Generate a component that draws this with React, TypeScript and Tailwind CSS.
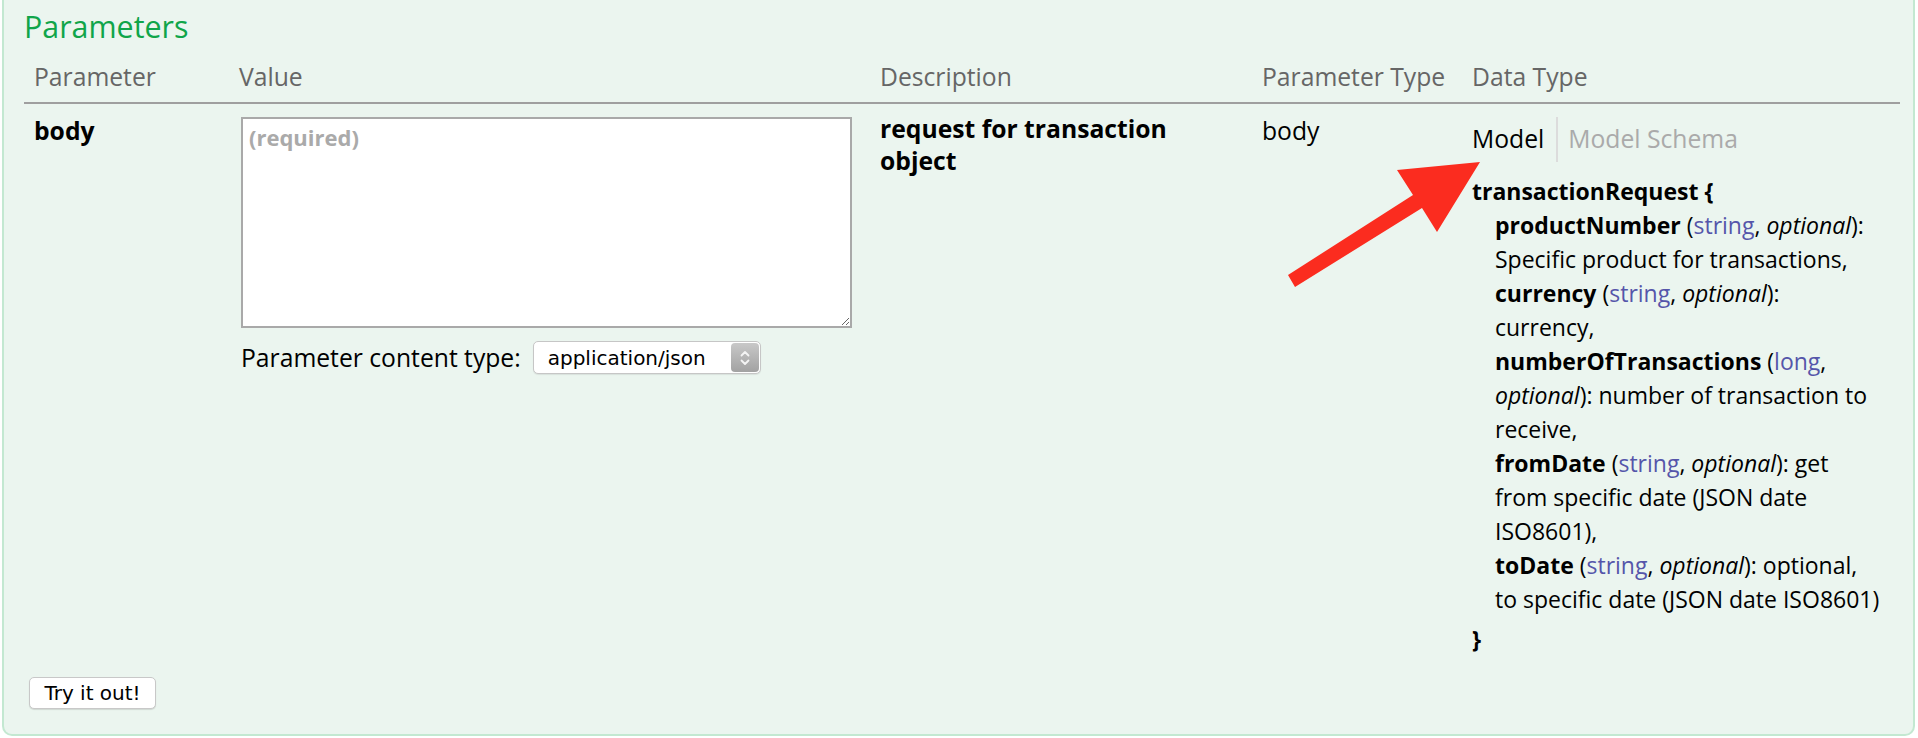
import React from 'react';

const cols = 'grid grid-cols-[205px_641px_382px_210px_438px]';

const T: React.FC<{ children: React.ReactNode }> = ({ children }) => (
  <span className="text-[#5555aa]">{children}</span>
);

const Opt = () => <span className="italic">optional</span>;

const App: React.FC = () => {
  return (
    <div className="relative w-[1918px] h-[738px] bg-white font-['Open_Sans',sans-serif] text-black overflow-hidden">
      <div className="ml-[2px] mr-[3px] bg-[#ebf5ef] border-2 border-t-0 border-[#c3e8d1] rounded-b-[10px] pt-[9px] pl-[20px] pr-[13px] pb-[25px]">
        <h4 className="text-[30.4px] leading-[36px] text-[#10a54a]">Parameters</h4>

        {/* header */}
        <div className={`${cols} mt-[16px] border-b-2 border-[#9f9f9f] text-[24.7px] leading-[32px] text-[#666]`}>
          <div className="px-[10px] pb-[9px]">Parameter</div>
          <div className="px-[10px] pb-[9px]">Value</div>
          <div className="px-[10px] pb-[9px]">Description</div>
          <div className="px-[10px] pb-[9px]">Parameter Type</div>
          <div className="px-[10px] pb-[9px]">Data Type</div>
        </div>

        {/* body row */}
        <div className={`${cols} text-[24.7px] leading-[32px]`}>
          <div className="px-[10px] pt-[11px] font-bold">body</div>
          <div className="px-[10px] pt-[11px]">
            <textarea
              placeholder="(required)"
              className="block ml-[2px] mt-[2px] w-[611px] h-[211px] bg-white border-2 border-[#a9a9a9] px-[6px] py-[3px] text-[22px] leading-[30px] font-bold outline-none placeholder:text-[#aaa] placeholder:font-bold"
            />
            <div className="flex items-center mt-[13px] ml-[2px]">
              <span className="text-[24.7px] leading-[32px]">Parameter content type:</span>
              <div className="ml-[12px] w-[228px] h-[33px] bg-white border border-[#c6c6c6] rounded-[5px] flex items-center justify-between shadow-[0_1px_1px_rgba(0,0,0,0.08)]">
                <span className="pl-[14px] font-['DejaVu_Sans',sans-serif] text-[20px] leading-[24px]">application/json</span>
                <div className="w-[28px] h-[29px] mr-[1px] rounded-[4px] bg-gradient-to-b from-[#c8c8c8] to-[#a2a2a2] flex items-center justify-center">
                  <svg width="12" height="20" viewBox="0 0 12 20" fill="none" stroke="#f4f4f4" strokeWidth="1.8" strokeLinecap="round" strokeLinejoin="round">
                    <path d="M2.5 7.5L6 4l3.5 3.5" />
                    <path d="M2.5 12.5L6 16l3.5-3.5" />
                  </svg>
                </div>
              </div>
            </div>
          </div>
          <div className="px-[10px] pt-[9px] font-bold">request for transaction object</div>
          <div className="px-[10px] pt-[11px]">body</div>
          <div className="px-[10px] pt-[11px]">
            <div className="flex mt-[2px] h-[45px]">
              <div className="pt-[6px] pr-[12px]">Model</div>
              <div className="pt-[6px] pl-[10px] border-l-2 border-[#dcdcdc] text-[#aaa]">Model Schema</div>
            </div>
            <div className="mt-[12px] text-[23px] leading-[34px] whitespace-nowrap">
              <div className="font-bold">transactionRequest {'{'}</div>
              <div className="pl-[23px]">
                <div><span className="font-bold">productNumber</span> (<T>string</T>, <Opt />):</div>
                <div>Specific product for transactions,</div>
                <div><span className="font-bold">currency</span> (<T>string</T>, <Opt />):</div>
                <div>currency,</div>
                <div><span className="font-bold">numberOfTransactions</span> (<T>long</T>,</div>
                <div><Opt />): number of transaction to</div>
                <div>receive,</div>
                <div><span className="font-bold">fromDate</span> (<T>string</T>, <Opt />): get</div>
                <div>from specific date (JSON date</div>
                <div>ISO8601),</div>
                <div><span className="font-bold">toDate</span> (<T>string</T>, <Opt />): optional,</div>
                <div>to specific date (JSON date ISO8601)</div>
              </div>
              <div className="font-bold mt-[6px]">{'}'}</div>
            </div>
          </div>
        </div>

        <button className="mt-[21px] ml-[5px] w-[127px] h-[32px] bg-white border border-[#c8c8c8] rounded-[5px] shadow-[0_1px_1px_rgba(0,0,0,0.12)] font-['DejaVu_Sans',sans-serif] text-[20px] leading-[24px] text-black">
          Try it out!
        </button>
      </div>

      {/* annotation arrow */}
      <svg className="absolute left-0 top-0 pointer-events-none" width="1918" height="738" viewBox="0 0 1918 738">
        <polygon
          fill="#fb2c1f"
          points="1288,275 1295,287 1422,208 1437,232 1480,162 1397,170 1413,195"
        />
      </svg>
    </div>
  );
};

export default App;
